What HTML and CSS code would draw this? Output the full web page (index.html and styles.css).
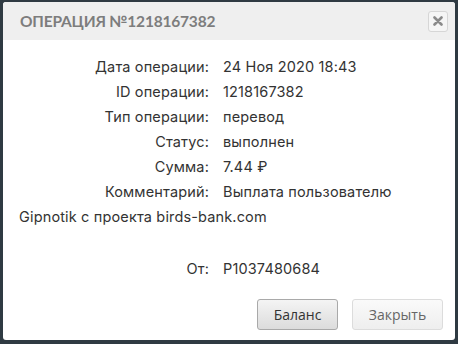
FILE: index.html
```html
<!DOCTYPE html>
<html>
<head>
<meta charset="utf-8">
<link rel="stylesheet" href="styles.css">
</head>
<body>
<div class="dialog">
  <div class="header">
    <div class="title">ОПЕРАЦИЯ №1218167382</div>
    <div class="close"><svg width="10" height="10" viewBox="0 0 10 10"><path d="M1.5 1.5 L8.5 8.5 M8.5 1.5 L1.5 8.5" stroke="#8a8a8a" stroke-width="2.6" stroke-linecap="round"/></svg></div>
  </div>
  <div class="body">
    <div class="row"><span class="label">Дата операции:</span>24 Ноя 2020 18:43</div>
    <div class="row"><span class="label">ID операции:</span>1218167382</div>
    <div class="row"><span class="label">Тип операции:</span>перевод</div>
    <div class="row"><span class="label">Статус:</span>выполнен</div>
    <div class="row"><span class="label">Сумма:</span>7.44 ₽</div>
    <div class="row"><span class="label">Комментарий:</span>Выплата пользователю Gipnotik с проекта birds-bank.com</div>
    <div class="row empty"></div>
    <div class="row"><span class="label">От:</span>P1037480684</div>
  </div>
  <div class="footer">
    <button class="btn primary">Баланс</button>
    <button class="btn secondary">Закрыть</button>
  </div>
</div>
</body>
</html>
```
FILE: styles.css
```css
html, body {
  margin: 0;
  padding: 0;
  background: #2f3a42;
}
body {
  padding: 2px 3px 4px 3px;
  height: 344px;
  box-sizing: border-box;
}
.dialog {
  background: #fff;
  height: 338px;
  border-radius: 3px;
  display: flex;
  flex-direction: column;
  overflow: hidden;
}
.header {
  background: #efefef;
  height: 38px;
  display: flex;
  align-items: center;
  justify-content: space-between;
  padding: 0 7px 0 17px;
}
.title {
  font-family: "Lato", sans-serif;
  font-weight: 700;
  font-size: 15.5px;
  color: #7d7d7d;
  letter-spacing: -0.2px;
}
.close {
  width: 18px;
  height: 19px;
  border: 1px solid #d6d6d6;
  border-radius: 3px;
  background: #f5f5f5;
  display: flex;
  align-items: center;
  justify-content: center;
}
.body {
  padding: 14px 16px 0 16px;
  font-family: "Inter", sans-serif;
  font-size: 14.5px;
  letter-spacing: 0.15px;
  color: #333;
  line-height: 25px;
  flex: 1;
}
.row {
  min-height: 25px;
}
.empty {
  height: 27px;
}
.label {
  display: inline-block;
  width: 190px;
  margin-right: 14px;
  text-align: right;
}
.footer {
  display: flex;
  justify-content: flex-end;
  gap: 14px;
  padding: 0 12px 10px 0;
}
.btn {
  font-family: "Open Sans", sans-serif;
  font-size: 14px;
  height: 31px;
  border-radius: 3px;
  padding: 0;
}
.primary {
  width: 81px;
  border: 1px solid #a9a9a9;
  background: linear-gradient(#f4f4f4, #dcdcdc);
  color: #333;
}
.secondary {
  width: 91px;
  border: 1px solid #dcdcdc;
  background: linear-gradient(#fafafa, #eeeeee);
  color: #666;
}
```
